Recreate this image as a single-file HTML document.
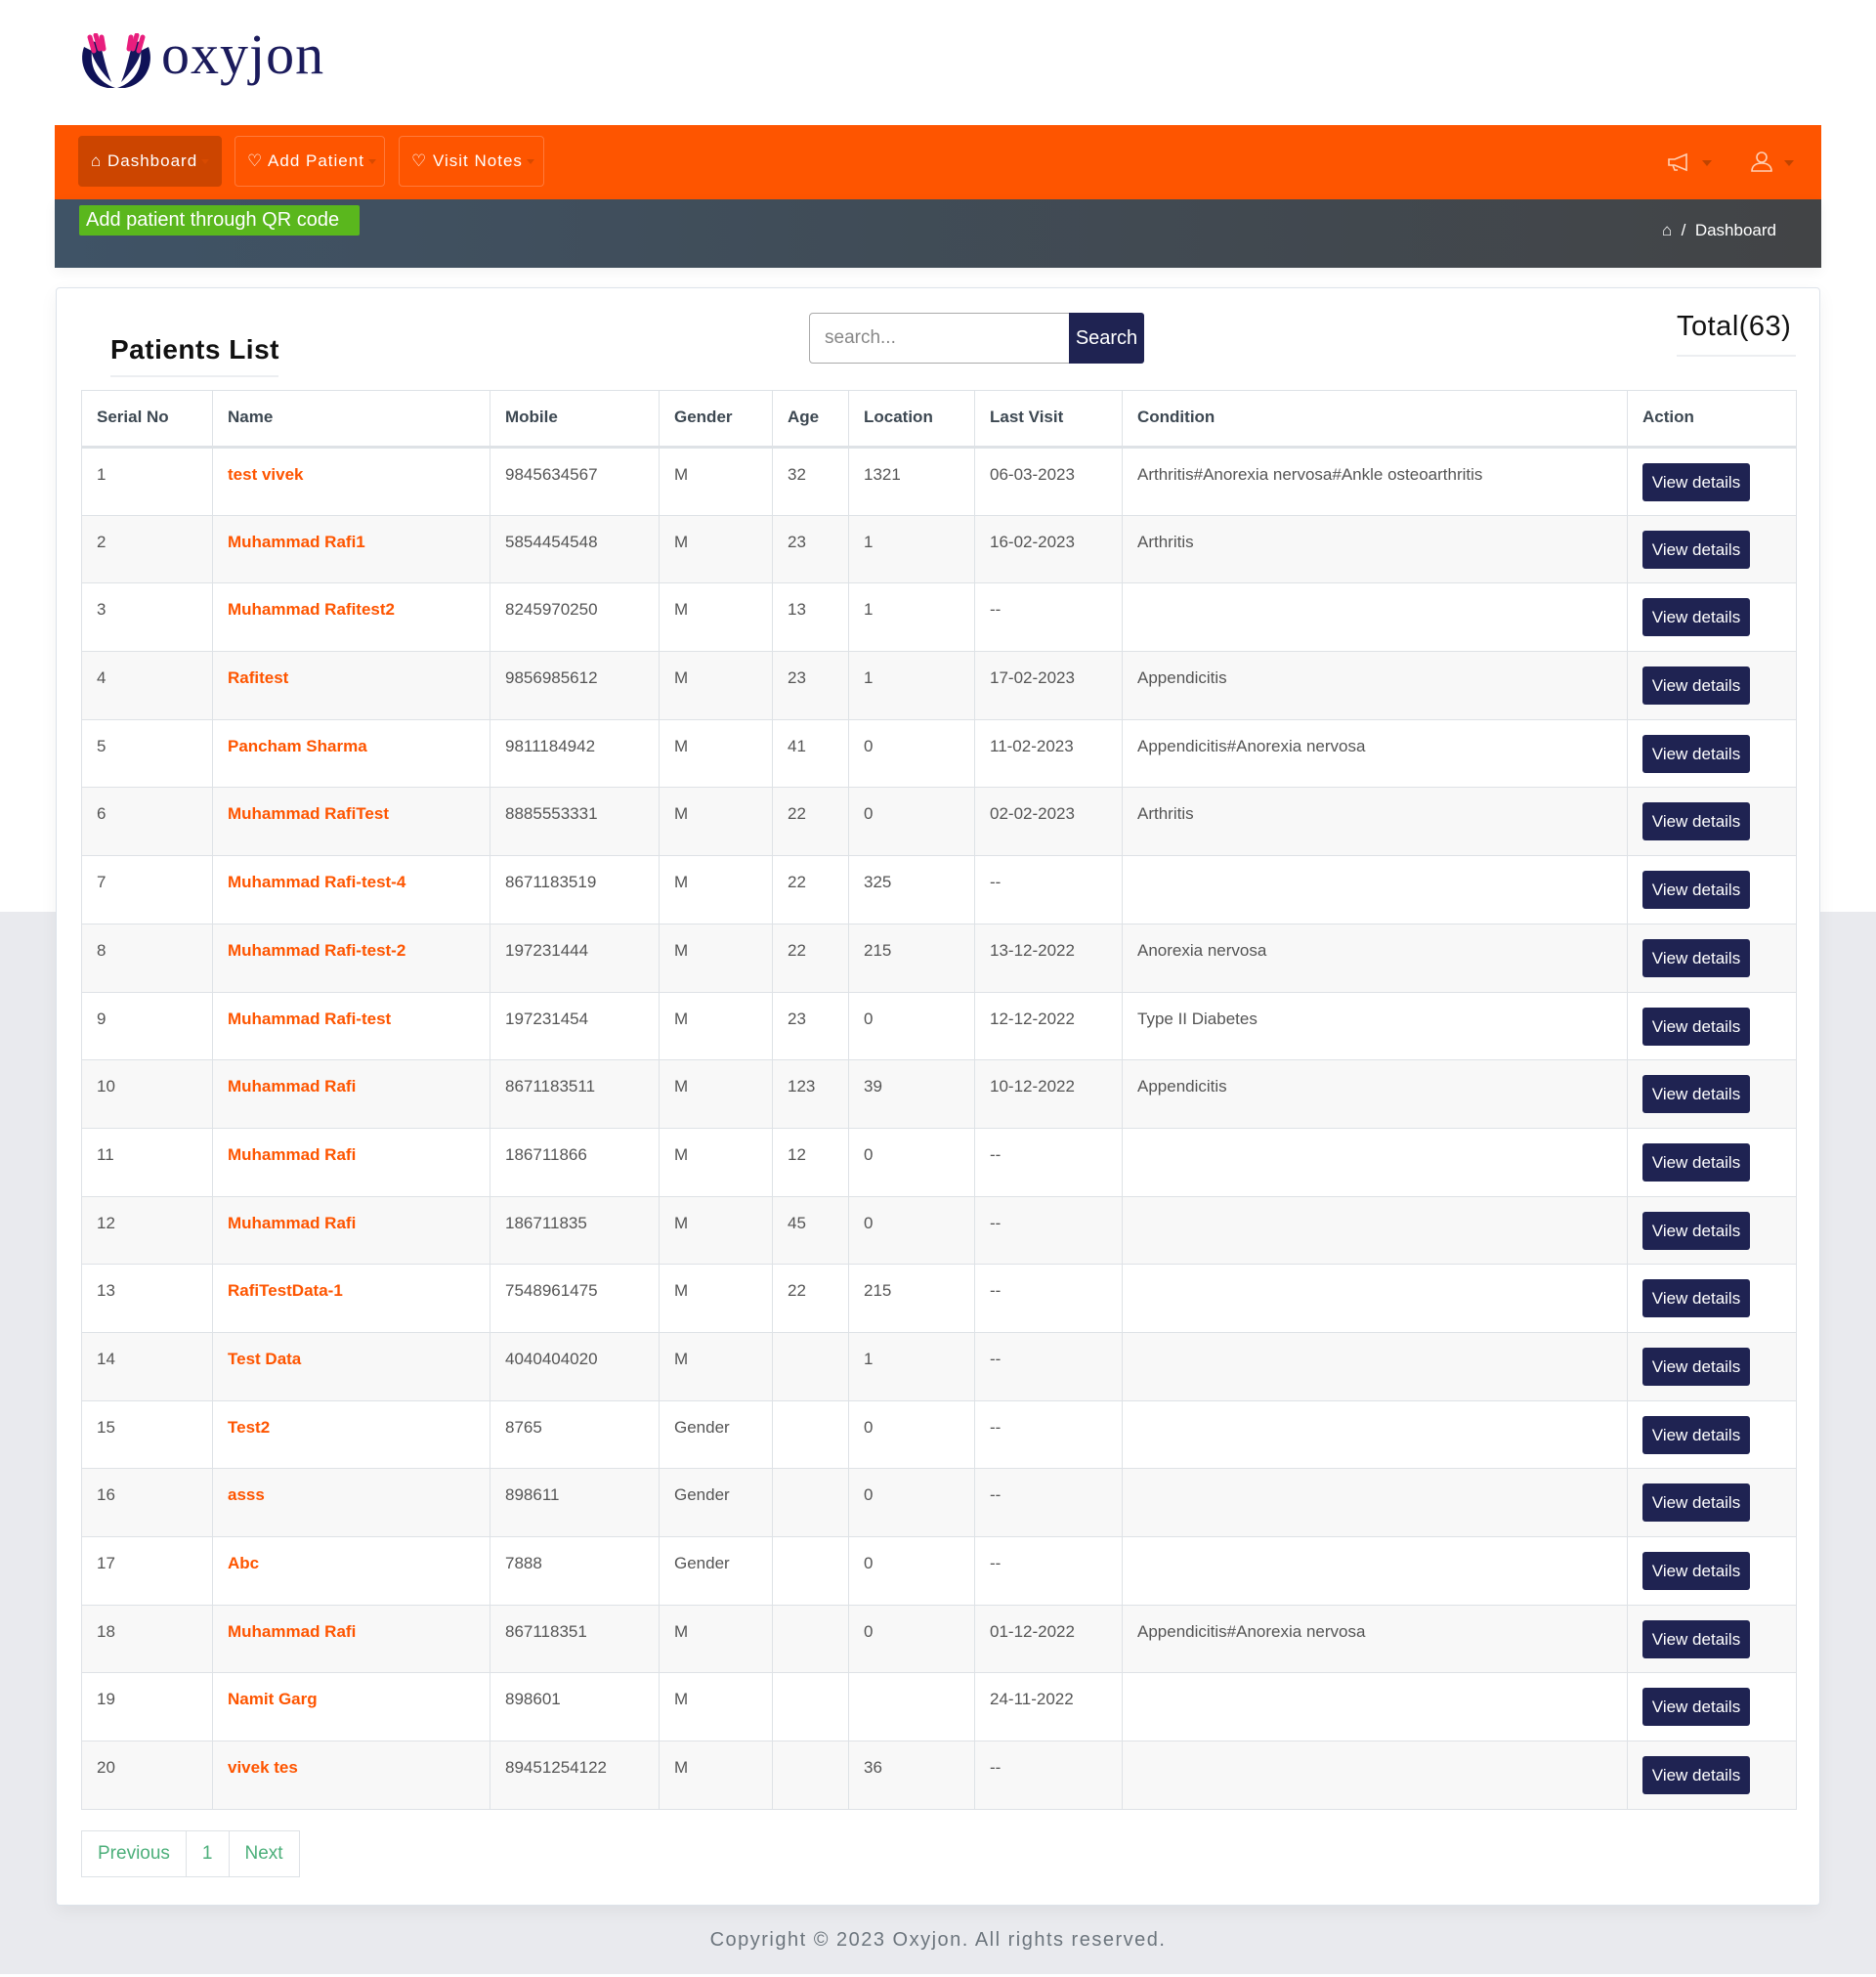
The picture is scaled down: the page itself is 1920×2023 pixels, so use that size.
<!DOCTYPE html>
<html><head><meta charset="utf-8"><style>
*{box-sizing:border-box;margin:0;padding:0}
body{width:1920px;height:2023px;background:#fff;font-family:"Liberation Sans",sans-serif;position:relative;overflow:hidden}
.graybg{position:absolute;left:0;top:933px;width:1920px;height:1087px;background:#e9eaee}
.logo{position:absolute;left:80px;top:34px;height:60px}
.logotext{position:absolute;left:165px;top:22px;font-family:"Liberation Serif",serif;font-size:58px;color:#1b1b5c;letter-spacing:1px}
.nav{position:absolute;left:56px;top:128px;width:1808px;height:76px;background:#fe5500}
.nb{position:absolute;top:11px;height:52px;border:1px solid #ff7a3a;border-radius:4px;color:#fff;font-size:17px;letter-spacing:1px;line-height:50px;padding-left:12px}
.nb .car{display:inline-block;width:0;height:0;border-left:4px solid transparent;border-right:4px solid transparent;border-top:5px solid #d84a00;vertical-align:middle;margin-left:4px}
.bar{position:absolute;left:56px;top:204px;width:1808px;height:70px;background:linear-gradient(90deg,#3f5366,#424446);box-shadow:0 4px 12px rgba(0,0,0,.05)}
.qr{position:absolute;left:25px;top:6px;width:287px;height:31px;background:#5ab71d;border-radius:2px;color:#fff;font-size:20px;line-height:31px;padding-left:7px}
.bc{position:absolute;right:46px;top:22px;color:#fff;font-size:17px}
.card{position:absolute;left:57px;top:294px;width:1806px;height:1656px;background:#fff;border:1px solid #dde3ea;border-radius:4px;box-shadow:0 6px 18px rgba(0,0,0,.05)}
.title{position:absolute;left:55px;top:47px;font-size:28px;color:#111;letter-spacing:.5px;font-weight:bold}
.tl{position:absolute;left:55px;top:89px;width:172px;height:2px;background:#eceef1}
.search{position:absolute;left:770px;top:25px;width:267px;height:52px;border:1px solid #aaa;border-radius:4px 0 0 4px;font-size:19px;color:#888;padding:14px 0 0 15px}
.sbtn{position:absolute;left:1036px;top:25px;width:77px;height:52px;background:#1f2352;color:#fff;font-size:20px;line-height:52px;text-align:center;border-radius:0 3px 3px 0}
.total{position:absolute;left:1658px;top:23px;font-size:29px;color:#111;letter-spacing:.5px}
.totl{position:absolute;left:1658px;top:68px;width:122px;height:2px;background:#eceef1}
table{position:absolute;left:25px;top:104px;border-collapse:collapse;width:1755px;table-layout:fixed;font-size:17px;color:#555}
th,td{border:1px solid #dee2e6;text-align:left;vertical-align:top;padding:17px 15px 0}
th{height:58px;color:#3d4852;font-weight:bold;border-bottom:3px solid #dee2e6}
td{height:69.7px}
tr:nth-child(odd) td{background:#f8f8f8}
td.n{color:#fe5500;font-weight:bold}
td.a{padding-top:15px}
.vd{display:inline-block;width:110px;height:39px;background:#1f2352;color:#fff;border-radius:3px;text-align:center;line-height:39px;font-size:17px}
.pg{position:absolute;left:25px;top:1578px;height:48px;display:flex;border:1px solid #dee2e6}
.pg div{padding:0 16px;line-height:46px;font-size:19px;color:#4caf7a;border-right:1px solid #dee2e6}
.pg div:last-child{border-right:none}
.foot{position:absolute;left:0;top:1974px;width:1920px;text-align:center;font-size:20px;color:#6c757d;letter-spacing:1.5px}
</style></head><body>
<div class="graybg"></div>
<svg class="logo" viewBox="0 0 78 60" width="78" height="60">
<path d="M6 14 C0 30 8 52 30 56 L38 56 C20 50 12 36 14 18 Z" fill="#0f1257"/>
<path d="M72 14 C78 30 70 52 48 56 L40 56 C58 50 66 36 64 18 Z" fill="#0f1257"/>
<path d="M14 8 C10 18 18 34 34 50 C28 36 26 22 22 10 Z" fill="#14165c"/>
<path d="M64 8 C68 18 60 34 44 50 C50 36 52 22 56 10 Z" fill="#14165c"/>
<path d="M12 4 L16 18 M18 2 L22 16 M24 4 L26 16" stroke="#e81e7d" stroke-width="5" stroke-linecap="round"/>
<path d="M66 4 L62 18 M60 2 L56 16 M54 4 L52 16" stroke="#e81e7d" stroke-width="5" stroke-linecap="round"/>
</svg>
<div class="logotext">oxyjon</div>
<div class="nav">
<div class="nb" style="left:24px;width:147px;background:#cc4500;border-color:#cc4500">⌂ Dashboard<span class="car"></span></div>
<div class="nb" style="left:184px;width:154px">♡ Add Patient<span class="car"></span></div>
<div class="nb" style="left:352px;width:149px">♡ Visit Notes<span class="car"></span></div>
<svg style="position:absolute;left:1650px;top:28px" width="24" height="20" viewBox="0 0 24 20" fill="none" stroke="#ffd0b5" stroke-width="1.6"><path d="M2 7 L2 13 L8 13 L20 18 L20 2 L8 7 Z M6 13 L8 18 L11 18"/></svg>
<span style="position:absolute;left:1686px;top:36px;border-left:5px solid transparent;border-right:5px solid transparent;border-top:6px solid #c04400"></span>
<svg style="position:absolute;left:1735px;top:26px" width="24" height="22" viewBox="0 0 24 22" fill="none" stroke="#ffd0b5" stroke-width="1.6"><circle cx="12" cy="7" r="5"/><path d="M2 21 C2 15 7 13 12 13 C17 13 22 15 22 21 Z"/></svg>
<span style="position:absolute;left:1770px;top:36px;border-left:5px solid transparent;border-right:5px solid transparent;border-top:6px solid #c04400"></span>
</div>
<div class="bar">
<div class="qr">Add patient through QR code</div>
<div class="bc">⌂ &nbsp;/&nbsp; Dashboard</div>
</div>
<div class="card">
<div class="title">Patients List</div><div class="tl"></div>
<div class="search">search...</div><div class="sbtn">Search</div>
<div class="total">Total(63)</div><div class="totl"></div>
<table>
<colgroup><col style="width:134px"><col style="width:284px"><col style="width:173px"><col style="width:116px"><col style="width:78px"><col style="width:129px"><col style="width:151px"><col style="width:517px"><col style="width:173px"></colgroup>
<tr><th>Serial No</th><th>Name</th><th>Mobile</th><th>Gender</th><th>Age</th><th>Location</th><th>Last Visit</th><th>Condition</th><th>Action</th></tr>
<tr><td>1</td><td class="n">test vivek</td><td>9845634567</td><td>M</td><td>32</td><td>1321</td><td>06-03-2023</td><td>Arthritis#Anorexia nervosa#Ankle osteoarthritis</td><td class="a"><span class="vd">View details</span></td></tr>
<tr><td>2</td><td class="n">Muhammad Rafi1</td><td>5854454548</td><td>M</td><td>23</td><td>1</td><td>16-02-2023</td><td>Arthritis</td><td class="a"><span class="vd">View details</span></td></tr>
<tr><td>3</td><td class="n">Muhammad Rafitest2</td><td>8245970250</td><td>M</td><td>13</td><td>1</td><td>--</td><td></td><td class="a"><span class="vd">View details</span></td></tr>
<tr><td>4</td><td class="n">Rafitest</td><td>9856985612</td><td>M</td><td>23</td><td>1</td><td>17-02-2023</td><td>Appendicitis</td><td class="a"><span class="vd">View details</span></td></tr>
<tr><td>5</td><td class="n">Pancham Sharma</td><td>9811184942</td><td>M</td><td>41</td><td>0</td><td>11-02-2023</td><td>Appendicitis#Anorexia nervosa</td><td class="a"><span class="vd">View details</span></td></tr>
<tr><td>6</td><td class="n">Muhammad RafiTest</td><td>8885553331</td><td>M</td><td>22</td><td>0</td><td>02-02-2023</td><td>Arthritis</td><td class="a"><span class="vd">View details</span></td></tr>
<tr><td>7</td><td class="n">Muhammad Rafi-test-4</td><td>8671183519</td><td>M</td><td>22</td><td>325</td><td>--</td><td></td><td class="a"><span class="vd">View details</span></td></tr>
<tr><td>8</td><td class="n">Muhammad Rafi-test-2</td><td>197231444</td><td>M</td><td>22</td><td>215</td><td>13-12-2022</td><td>Anorexia nervosa</td><td class="a"><span class="vd">View details</span></td></tr>
<tr><td>9</td><td class="n">Muhammad Rafi-test</td><td>197231454</td><td>M</td><td>23</td><td>0</td><td>12-12-2022</td><td>Type II Diabetes</td><td class="a"><span class="vd">View details</span></td></tr>
<tr><td>10</td><td class="n">Muhammad Rafi</td><td>8671183511</td><td>M</td><td>123</td><td>39</td><td>10-12-2022</td><td>Appendicitis</td><td class="a"><span class="vd">View details</span></td></tr>
<tr><td>11</td><td class="n">Muhammad Rafi</td><td>186711866</td><td>M</td><td>12</td><td>0</td><td>--</td><td></td><td class="a"><span class="vd">View details</span></td></tr>
<tr><td>12</td><td class="n">Muhammad Rafi</td><td>186711835</td><td>M</td><td>45</td><td>0</td><td>--</td><td></td><td class="a"><span class="vd">View details</span></td></tr>
<tr><td>13</td><td class="n">RafiTestData-1</td><td>7548961475</td><td>M</td><td>22</td><td>215</td><td>--</td><td></td><td class="a"><span class="vd">View details</span></td></tr>
<tr><td>14</td><td class="n">Test Data</td><td>4040404020</td><td>M</td><td></td><td>1</td><td>--</td><td></td><td class="a"><span class="vd">View details</span></td></tr>
<tr><td>15</td><td class="n">Test2</td><td>8765</td><td>Gender</td><td></td><td>0</td><td>--</td><td></td><td class="a"><span class="vd">View details</span></td></tr>
<tr><td>16</td><td class="n">asss</td><td>898611</td><td>Gender</td><td></td><td>0</td><td>--</td><td></td><td class="a"><span class="vd">View details</span></td></tr>
<tr><td>17</td><td class="n">Abc</td><td>7888</td><td>Gender</td><td></td><td>0</td><td>--</td><td></td><td class="a"><span class="vd">View details</span></td></tr>
<tr><td>18</td><td class="n">Muhammad Rafi</td><td>867118351</td><td>M</td><td></td><td>0</td><td>01-12-2022</td><td>Appendicitis#Anorexia nervosa</td><td class="a"><span class="vd">View details</span></td></tr>
<tr><td>19</td><td class="n">Namit Garg</td><td>898601</td><td>M</td><td></td><td></td><td>24-11-2022</td><td></td><td class="a"><span class="vd">View details</span></td></tr>
<tr><td>20</td><td class="n">vivek tes</td><td>89451254122</td><td>M</td><td></td><td>36</td><td>--</td><td></td><td class="a"><span class="vd">View details</span></td></tr>
</table>
<div class="pg"><div>Previous</div><div>1</div><div>Next</div></div>
</div>
<div class="foot">Copyright © 2023 Oxyjon. All rights reserved.</div>
</body></html>
